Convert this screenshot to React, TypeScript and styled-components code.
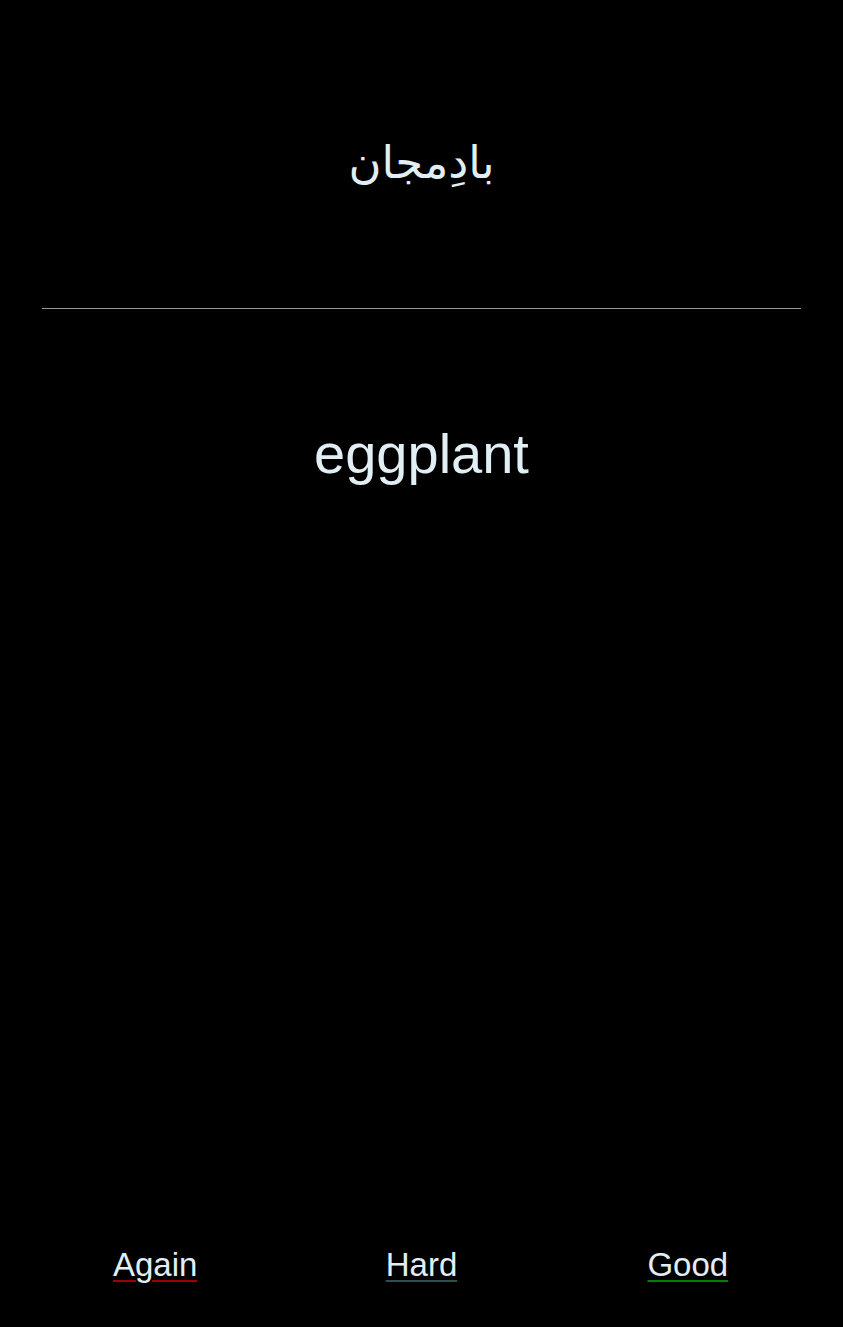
import React from "react";
import styled, { createGlobalStyle } from "styled-components";

const Global = createGlobalStyle`
  html, body { margin: 0; padding: 0; background: #000; }
  body { font-family: "Liberation Sans", "DejaVu Sans", Arial, sans-serif; color: #e1eef4; }
`;

const Page = styled.div`
  min-height: 1327px;
  display: flex;
  flex-direction: column;
  background: #000;
`;

const Main = styled.main`
  flex: 1;
  display: flex;
  flex-direction: column;
`;

const Front = styled.div`
  height: 308px;
  display: flex;
  justify-content: center;
  padding-top: 136px;
  box-sizing: border-box;
  font-size: 45px;
  line-height: 1.2;
`;

const Rule = styled.hr`
  margin: 0 42px;
  border: none;
  border-top: 1px solid #9a9a9a;
  height: 0;
`;

const Back = styled.div`
  display: flex;
  justify-content: center;
  padding-top: 111px;
  font-size: 56px;
  line-height: 1.2;
`;

const Footer = styled.footer`
  display: grid;
  grid-template-columns: repeat(3, 1fr);
  padding: 0 22px 43px;
`;

const Answer = styled.a<{ $line: string }>`
  justify-self: center;
  font-size: 33px;
  color: #e1eef4;
  text-decoration: underline;
  text-decoration-color: ${(p) => p.$line};
  text-decoration-thickness: 2px;
  text-underline-offset: 4px;
  cursor: pointer;
`;

export default function App() {
  return (
    <Page>
      <Global />
      <Main>
        <Front dir="rtl" lang="fa">بادِمجان</Front>
        <Rule />
        <Back>eggplant</Back>
      </Main>
      <Footer>
        <Answer $line="#a00000">Again</Answer>
        <Answer $line="#2f4f4f">Hard</Answer>
        <Answer $line="#008000">Good</Answer>
      </Footer>
    </Page>
  );
}
